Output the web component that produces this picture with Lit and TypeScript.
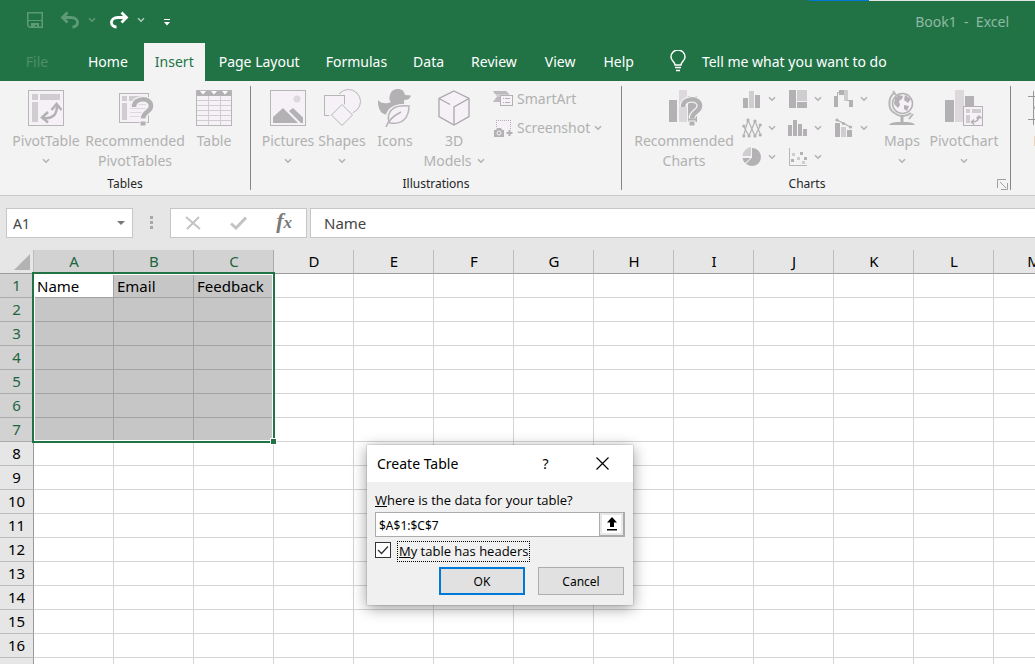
import { LitElement, html, svg, css, nothing, TemplateResult } from "lit";
import { customElement, property, state } from "lit/decorators.js";
import { classMap } from "lit/directives/class-map.js";

const DARK = "#b3b1b3";
const LINE = "#b8b6b8";
const MID = "#d0cdd0";
const PALE = "#dcd8dc";
const FILL = "#f5f1f7";

const icon = (w: number, h: number, body: unknown) => html`<svg
  width=${w}
  height=${h}
  viewBox="0 0 ${w} ${h}"
  fill="none"
  aria-hidden="true"
>${body}</svg>`;

const chevron = () => icon(8, 6, svg`<path d="M1 1.2 4 4.2 7 1.2" stroke="currentColor" stroke-width="1.5"/>`);

const question = svg`
  <path d="M18 18c0-10 17-10 17-1 0 6-8 5.500-8 12.500" stroke="#f3f3f3" stroke-width="7"/>
  <path d="M18 18c0-10 17-10 17-1 0 6-8 5.500-8 12.500" stroke="${DARK}" stroke-width="4.500"/>
  <rect x="24" y="32" width="6" height="5" fill="${DARK}" stroke="#f3f3f3"/>`;

const icons: Record<string, TemplateResult> = {
  pivotTable: icon(36, 36, svg`
    <rect x=".5" y=".5" width="35" height="35" fill="${FILL}" stroke="${LINE}"/>
    <path d="M4 4h6v6H4zM12 4h20v6H12zM4 12h6v20H4z" fill="${MID}"/>
    <path d="M16 28c8 1 13-3 13-12" stroke="${DARK}" stroke-width="2.500"/>
    <path d="M20 22l-6 5.500 6 5M23.500 20l5-6 5 6" stroke="${DARK}" stroke-width="2.500"/>`),
  recPivot: icon(38, 38, svg`
    <rect x="3.500" y="4.500" width="29" height="29" fill="${FILL}" stroke="${LINE}"/>
    <path d="M6 7h5v5H6zM13 7h17v5H13zM6 14h5v17H6z" fill="${MID}"/>
    <path d="M14 15.500h16M14 19.500h16M14 23.500h16M14 27.500h16" stroke="${PALE}"/>
    ${question}`),
  table: icon(36, 36, svg`
    <rect x=".5" y=".5" width="35" height="35" fill="${FILL}" stroke="${LINE}"/>
    <path d="M0 0h36v6H0z" fill="${DARK}"/>
    <path d="M4 1h6L7 4.500zM15 1h6l-3 3.500zM26 1h6l-3 3.500z" fill="#fff"/>
    <path d="M0 10.500h36M0 15.500h36M0 20.500h36M0 25.500h36M0 30.500h36M12.500 6v30M24.500 6v30" stroke="${MID}"/>
    <rect x=".5" y=".5" width="35" height="35" stroke="${LINE}"/>`),
  pictures: icon(36, 36, svg`
    <rect x=".5" y=".5" width="35" height="35" fill="${FILL}" stroke="${LINE}"/>
    <circle cx="27" cy="9" r="3.500" fill="${PALE}"/>
    <path d="M3 33V27l10-9 15 15zM19 21l4-3 10 9.500V33h-2z" fill="${DARK}"/>`),
  shapes: icon(38, 38, svg`
    <circle cx="25.500" cy="12.500" r="12" fill="${FILL}" stroke="${LINE}"/>
    <rect x="1.500" y="6.500" width="20" height="20" fill="${FILL}" stroke="#f3f3f3" stroke-width="3"/>
    <rect x="1.500" y="6.500" width="20" height="20" fill="${FILL}" stroke="${LINE}"/>
    <path d="M19 15 30 26 19 37 8 26z" fill="${FILL}" stroke="#f3f3f3" stroke-width="3"/>
    <path d="M19 15.500 29.500 26 19 36.500 8.500 26z" fill="${FILL}" stroke="${LINE}"/>`),
  icons: icon(38, 38, svg`
    <path d="M2 11c3 4 9 4 13 2-2-2-2-4-1-7 1-4 4-6 8-6s6 2 7 6l6 .5c-1 3-3 4.500-7 4.500 0 3 1 8-3 12-5 4-17 4-20 0-3-4-3-8-3-12z" fill="${DARK}"/>
    <path d="M33 17c-11-1-20 2-21 10-1 3 0 5 1 7 12 3 19-5 20-17z" fill="${FILL}" stroke="#f3f3f3" stroke-width="4"/>
    <path d="M33 17c-11-1-19 2-20.500 10-.5 3 0 5 1.500 7 12 2 19-5 19-17z" fill="${FILL}" stroke="${LINE}" stroke-width="1.500"/>
    <path d="M10 38c2-6 7-11 15-15" stroke="${DARK}" stroke-width="1.500"/>`),
  cube: icon(34, 36, svg`
    <path d="M17 1 32 8.500v18L17 35 2 26.500v-18z" fill="${FILL}" stroke="#aaa8aa" stroke-width="1.300"/>
    <path d="M2 8.500l11 6M32 8.500 17 17v18" stroke="#aaa8aa" stroke-width="1.300"/>`),
  smartArt: icon(20, 18, svg`
    <path d="M0 1h13l4 4H7v7H0l4-5.500z" fill="${MID}"/><path d="M0 1h13l3 3H2zM4 7h3v5H0z" fill="#bdbbbd"/>
    <rect x="7.500" y="5.500" width="12" height="10" fill="${FILL}" stroke="${DARK}"/>
    <path d="M10 8.500h1M12 8.500h5M10 12.500h1M12 12.500h5" stroke="${DARK}"/>`),
  screenshot: icon(20, 18, svg`
    <rect x="3" y="1" width="15" height="13" fill="${FILL}"/>
    <path d="M3 1.500h15M3.500 1v9M17.500 1v9" stroke="${DARK}" stroke-dasharray="1 1"/>
    <path d="M0 9h12v9H0z" fill="#f3f3f3"/>
    <path d="M1 11h2l1-2h4l1 2h2v7H1z" fill="${DARK}"/><circle cx="6" cy="14" r="2" fill="${DARK}" stroke="#f3f3f3"/>
    <path d="M16.500 10v7M13 13.500h7" stroke="#f3f3f3" stroke-width="4"/>
    <path d="M16.500 11v6M13.500 14h6" stroke="${DARK}" stroke-width="2"/>`),
  recCharts: icon(38, 38, svg`
    <path d="M4 11h8v22H4zM23 7h9v26h-9z" fill="${DARK}"/><path d="M14 1h8v32h-8z" fill="${PALE}"/>
    ${question}`),
  column: icon(20, 20, svg`<path d="M1 9h5v10H1zM13 6h5v13h-5z" fill="${DARK}"/><path d="M7 2h5v17H7z" fill="${MID}"/>`),
  treemap: icon(20, 20, svg`<path d="M1 1h7v18H1zM9 13h10v6H9z" fill="${DARK}"/><path d="M9 1h10v11H9z" fill="${MID}"/>`),
  waterfall: icon(20, 20, svg`<path d="M0 7h4v11H0zM5 1h5v5H5zM15 11h4v7h-4z" fill="${DARK}"/><path d="M10 1h4v11h-4z" fill="${MID}"/><path d="M3.500 7V3.500H6M13 11.500h4" stroke="${DARK}"/>`),
  line: icon(20, 20, svg`<path d="M1.500 18 6 2l7 16 5.500-11M1.500 8 7 18 13 3l6 15" stroke="${DARK}" stroke-width="1.200"/>
    <g fill="${DARK}"><circle cx="6" cy="2" r="1.600"/><circle cx="13" cy="3" r="1.600"/><circle cx="1.800" cy="8" r="1.600"/><circle cx="18.200" cy="7" r="1.600"/><circle cx="1.800" cy="18" r="1.600"/><circle cx="7" cy="18" r="1.600"/><circle cx="13" cy="18" r="1.600"/><circle cx="18.200" cy="17" r="1.600"/></g>`),
  histogram: icon(20, 20, svg`<path d="M0 7h4v11H0zM5 2h4v16H5zM10 6h4v12h-4zM15 11h4v7h-4z" fill="${DARK}"/>`),
  combo: icon(20, 20, svg`<path d="M1 5h5v14H1zM13 12h5v7h-5z" fill="${DARK}"/><path d="M7 9h5v10H7z" fill="${MID}"/><path d="M3 2l7 3.500 7 4" stroke="${DARK}" stroke-width="1.200"/><g fill="${DARK}"><circle cx="3" cy="2" r="1.600"/><circle cx="9.500" cy="5.500" r="1.600"/><circle cx="16.500" cy="9" r="1.600"/></g>`),
  pie: icon(20, 20, svg`<path d="M10 10V1a9 9 0 1 1-6.400 15.400z" fill="${DARK}"/><path d="M9 9V0A9.500 9.500 0 0 0 .5 9z" fill="${MID}"/><path d="M.5 11H8.500L3 16A9 9 0 0 1 .5 11z" fill="${DARK}"/><path d="M10 10 3 17.500" stroke="#f3f3f3"/>`),
  scatter: icon(20, 20, svg`<path d="M1.500 1v17.500H19" stroke="${LINE}"/><path d="M12 5h3v3h-3zM3 12h3v3H3zM16 10h3v3h-3z" fill="${DARK}"/><path d="M4 6h3v3H4zM9 10h3v3H9zM14 14h3v3h-3z" fill="${MID}"/>`),
  globe: icon(28, 36, svg`
    <path d="M6 3C0 8 0 18 5 22s12 6 18 1" stroke="${LINE}" stroke-width="2"/>
    <path d="M21 29l4-5M5 1l3 4" stroke="${LINE}" stroke-width="2"/>
    <circle cx="14.500" cy="13.500" r="10" fill="${FILL}" stroke="${DARK}" stroke-width="1.500"/>
    <path d="M7 8l4-3 4 1-1 3-3 2 1 4-2 3-4-4zM17 5l6 4-3 4-4-3zM16 15l5 1-2 5-3-2z" fill="${DARK}"/>
    <path d="M14 25v7" stroke="${DARK}" stroke-width="3"/><path d="M1 35c2-3 6-3 13-3s11 0 13 3z" fill="${DARK}"/>`),
  pivotChart: icon(38, 38, svg`
    <path d="M0 11h9v22H0zM20 7h9v26h-9z" fill="${DARK}"/><path d="M10 1h9v32h-9z" fill="${PALE}"/>
    <rect x="18.500" y="17.500" width="19" height="19" fill="${FILL}" stroke="${DARK}"/>
    <path d="M21 20h4v4h-4zM27 20h9v4h-9zM21 26h4v8h-4z" fill="${MID}"/>
    <path d="M27 33c5 0 7-2 7-6M29 30.500 26.500 33l2.500 2.500M31.500 29.500 34 27l2.500 2.500" stroke="${DARK}" stroke-width="1.500"/>`),
  sparkLine: icon(38, 36, svg`<path d="M5.500 1v34M32.500 1v34M0 6.500h38M0 29.500h38" stroke="#9a989a"/><path d="M6 17l7 6 6-9 5 8 8-8" stroke="${DARK}" stroke-width="2"/>`),
};

const save = icon(18, 18, svg`<path d="M1.750 1.750h14.500v14.500H3.500l-1.750-1.750z" stroke="currentColor" stroke-width="1.500"/><path d="M2 9.500h14" stroke="currentColor"/><path d="M5 12h8v5h-2v-3H9v3H5z" fill="currentColor"/>`);
const undo = icon(20, 18, svg`<path d="M2.500 6.500H11c9 0 8 9.500 1.500 9.500M7.500 1.500l-5 5 5 5" stroke="currentColor" stroke-width="2.800"/>`);
const redo = icon(20, 18, svg`<path d="M17.500 6.500H9c-9 0-8 9.500-1.500 9.500M12.500 1.500l5 5-5 5" stroke="currentColor" stroke-width="2.800"/>`);

type Tool = { label: string[]; icon: string; size: string; arrow?: "below" | "inline" };

const tables: Tool[] = [
  { label: ["PivotTable"], icon: "pivotTable", size: "w72", arrow: "below" },
  { label: ["Recommended", "PivotTables"], icon: "recPivot", size: "w106" },
  { label: ["Table"], icon: "table", size: "w52" },
];
const illustrations: Tool[] = [
  { label: ["Pictures"], icon: "pictures", size: "w54", arrow: "below" },
  { label: ["Shapes"], icon: "shapes", size: "w54", arrow: "below" },
  { label: ["Icons"], icon: "icons", size: "w52" },
  { label: ["3D", "Models"], icon: "cube", size: "w66", arrow: "inline" },
];
const miniCharts = ["column", "treemap", "waterfall", "line", "histogram", "combo", "pie", "scatter"];

@customElement("ribbon-bar")
class RibbonBar extends LitElement {
  static styles = css`
    :host { display: flex; height: 115px; box-sizing: border-box; overflow: hidden; background: #f3f3f3; border-bottom: 1px solid #c8c8c8; }
    button { font: inherit; color: inherit; background: none; border: 0; padding: 0; margin: 0; }
    svg { display: block; flex: none; }
    .group { flex: none; display: flex; flex-direction: column; position: relative; padding: 3px 11px 0 10px; }
    .group::after { content: ""; position: absolute; right: 0; top: 5px; bottom: 5px; width: 1px; background: #868686; }
    .last { padding-right: 7px; }
    .last .foot { margin-right: -4px; }
    .tools { display: flex; height: 91px; color: #b1b1b1; font-size: 14px; line-height: 20px; }
    .tool { flex: none; display: flex; flex-direction: column; align-items: center; white-space: nowrap; }
    .pic { height: 47px; display: flex; align-items: center; }
    .row { height: 20px; display: flex; align-items: center; justify-content: center; gap: 5px; }
    .w44 { width: 44px; } .w52 { width: 52px; } .w54 { width: 54px; } .w66 { width: 66px; }
    .w72 { width: 72px; } .w80 { width: 80px; } .w104 { width: 104px; } .w106 { width: 106px; }
    .stack { width: 124px; padding-left: 6px; box-sizing: border-box; display: flex; flex-direction: column; }
    .small { height: 29px; display: flex; align-items: center; gap: 4px; }
    .minis { padding-left: 6px; display: grid; grid-template-columns: repeat(3, 46px); grid-auto-rows: 29px; }
    .mini { display: flex; align-items: center; gap: 6px; }
    .foot { display: flex; height: 22px; align-items: center; font-size: 12px; line-height: 16px; color: #262626; }
    .caption { flex: 1; text-align: center; }
    .launch { width: 26px; display: flex; justify-content: flex-end; }
  `;

  private tool(t: Tool) {
    return html`<button class="tool ${t.size}" disabled>
      <span class="pic">${icons[t.icon]}</span>
      ${t.label.map((l, i) => html`<span class="row">${l}${t.arrow === "inline" && i === t.label.length - 1 ? chevron() : nothing}</span>`)}
      ${t.arrow === "below" ? html`<span class="row">${chevron()}</span>` : nothing}
    </button>`;
  }

  render() {
    return html`
      <section class="group">
        <div class="tools">${tables.map((t) => this.tool(t))}</div>
        <div class="foot"><span class="caption">Tables</span></div>
      </section>
      <section class="group">
        <div class="tools">
          ${illustrations.map((t) => this.tool(t))}
          <div class="stack">
            <button class="small" disabled>${icons.smartArt}<span>SmartArt</span></button>
            <button class="small" disabled>${icons.screenshot}<span>Screenshot</span>${chevron()}</button>
          </div>
        </div>
        <div class="foot"><span class="caption">Illustrations</span></div>
      </section>
      <section class="group last">
        <div class="tools">
          ${this.tool({ label: ["Recommended", "Charts"], icon: "recCharts", size: "w104" })}
          <div class="minis">
            ${miniCharts.map((m) => html`<button class="mini" aria-label="${m} chart" disabled>${icons[m]}${chevron()}</button>`)}
          </div>
          ${this.tool({ label: ["Maps"], icon: "globe", size: "w44", arrow: "below" })}
          ${this.tool({ label: ["PivotChart"], icon: "pivotChart", size: "w80", arrow: "below" })}
        </div>
        <div class="foot">
          <span class="caption">Charts</span>
          <button class="launch" aria-label="Chart options">
            ${icon(11, 11, svg`<path d="M.5 9V.5H9M3 3l6 6M10.500 4v6.500H4" stroke="#a0a0a0"/>`)}
          </button>
        </div>
      </section>
      <section class="group">
        <div class="tools">${this.tool({ label: ["Line"], icon: "sparkLine", size: "w52" })}</div>
      </section>
    `;
  }
}

@customElement("sheet-grid")
class SheetGrid extends LitElement {
  @property({ type: Number }) selectedRows = 7;
  @property({ type: Number }) selectedCols = 3;
  @state() private values = ["Name", "Email", "Feedback"];
  @state() private colCount = 13;
  @state() private rowCount = 17;

  private observer = new ResizeObserver(() => {
    this.colCount = Math.max(this.selectedCols, Math.min(26, Math.ceil((this.clientWidth - 34) / 80)));
    this.rowCount = Math.max(this.selectedRows, Math.ceil((this.clientHeight - 24) / 24));
  });

  connectedCallback() {
    super.connectedCallback();
    this.observer.observe(this);
  }

  disconnectedCallback() {
    this.observer.disconnect();
    super.disconnectedCallback();
  }

  static styles = css`
    :host { display: block; position: relative; overflow: hidden; background: #fff; }
    table { border-collapse: separate; border-spacing: 0; table-layout: fixed; width: max-content; font-size: 15px; line-height: 22px; }
    th, td { box-sizing: border-box; height: 24px; padding: 0; white-space: nowrap; border: 0 solid #d4d4d4; border-width: 0 1px 1px 0; }
    th { background: #e6e6e6; font-weight: 400; text-align: center; vertical-align: top; line-height: 23px; color: #000; }
    thead th { width: 80px; min-width: 80px; padding-left: 1px; border-color: #bdbdbd; border-bottom-color: #9b9b9b; }
    th.edge { width: 34px; min-width: 34px; border-right-color: #9b9b9b; border-bottom-color: #bdbdbd; }
    thead th.edge { border-right-color: #bdbdbd; border-bottom-color: #9b9b9b; }
    .edge svg { display: block; margin: 4px 0 0 13px; }
    th.on { background: #d2d2d2; color: #1e6440; border-color: #ababab; }
    td { padding-left: 3px; color: #000; }
    td.on { background: #c6c6c6; border-color: #a2a2a2; }
    td.active { background: #fff; }
    .selection { position: absolute; left: 32px; top: 22px; box-sizing: border-box; border: 2px solid #217346; box-shadow: inset 0 0 0 1px #fff; pointer-events: none; }
    .handle { position: absolute; right: -4px; bottom: -4px; width: 5px; height: 5px; background: #217346; border: 1px solid #fff; }
  `;

  render() {
    const cols = Array.from({ length: this.colCount }, (_, i) => String.fromCharCode(65 + i));
    const rows = Array.from({ length: this.rowCount }, (_, i) => i + 1);
    return html`
      <table>
        <thead>
          <tr>
            <th class="edge">${icon(16, 16, svg`<path d="M16 0v16H0z" fill="#b3b3b3"/>`)}</th>
            ${cols.map((c, i) => html`<th scope="col" class=${classMap({ on: i < this.selectedCols })}>${c}</th>`)}
          </tr>
        </thead>
        <tbody>
          ${rows.map((r) => html`<tr>
            <th scope="row" class=${classMap({ edge: true, on: r <= this.selectedRows })}>${r}</th>
            ${cols.map((_, i) => html`<td class=${classMap({ on: r <= this.selectedRows && i < this.selectedCols, active: r === 1 && i === 0 })}>${r === 1 ? this.values[i] ?? nothing : nothing}</td>`)}
          </tr>`)}
        </tbody>
      </table>
      <div class="selection" style="width:${this.selectedCols * 80 + 3}px;height:${this.selectedRows * 24 + 3}px"><span class="handle"></span></div>
    `;
  }
}

@customElement("create-table-dialog")
class CreateTableDialog extends LitElement {
  static styles = css`
    :host { display: block; box-sizing: border-box; background: #f0f0f0; box-shadow: 0 3px 14px rgba(0, 0, 0, 0.4), 0 0 1px rgba(0, 0, 0, 0.5); font-size: 12px; line-height: 16px; color: #000; }
    * { box-sizing: border-box; }
    button { font: inherit; color: inherit; padding: 0; margin: 0; }
    svg { display: block; }
    header { display: flex; align-items: center; height: 37px; padding: 0 2px 0 10px; background: #fff; font-size: 14px; }
    h1 { flex: 1; margin: 0; font-size: 14px; font-weight: 400; }
    .cap { width: 57px; height: 37px; display: flex; align-items: center; justify-content: center; background: none; border: 0; }
    .body { display: flex; flex-direction: column; padding: 10px 8px; }
    .question, .check label { font-family: "Open Sans", "Noto Sans", sans-serif; font-size: 13px; }
    .question { margin-bottom: 4px; }
    .field { display: flex; height: 25px; border: 1px solid #ababab; background: #fff; }
    .field input { flex: 1; min-width: 0; border: 0; padding: 2px 3px 0; font: inherit; background: none; outline: none; }
    .pick { width: 25px; border: 1px solid #ababab; border-width: 0 1px 1px; background: #fff; display: flex; align-items: center; justify-content: center; box-shadow: inset 0 0 0 2px #e8e8e8; }
    .check { display: flex; align-items: center; gap: 6px; margin-top: 4px; }
    .box { appearance: none; margin: 0; width: 16px; height: 16px; border: 1px solid #333; background: #fff; grid-area: 1 / 1; }
    .mark { grid-area: 1 / 1; pointer-events: none; display: none; }
    .box:checked + .mark { display: block; }
    .tick { display: grid; padding-bottom: 3px; }
    .check label { padding: 1px 1px; border: 1px dotted #000; height: 21px; }
    .actions { display: flex; justify-content: flex-end; gap: 13px; padding-right: 1px; margin-top: 5px; }
    .btn { width: 86px; height: 28px; padding-top: 1px; background: #e1e1e1; border: 1px solid #adadad; }
    .primary { border: 2px solid #0078d7; }
  `;

  render() {
    return html`
      <header>
        <h1>Create Table</h1>
        <button class="cap" aria-label="Help">?</button>
        <button class="cap" aria-label="Close">${icon(13, 13, svg`<path d="M.5.5l12 12M12.500.5l-12 12" stroke="#000" stroke-width="1.200"/>`)}</button>
      </header>
      <div class="body">
        <label class="question" for="range"><u>W</u>here is the data for your table?</label>
        <div class="field">
          <input id="range" type="text" value="$A$1:$C$7" />
          <button class="pick" aria-label="Select range">${icon(12, 14, svg`<path d="M6 0l5 5.500H8V10H4V5.500H1zM1 12h10v1.500H1z" fill="#000"/>`)}</button>
        </div>
        <div class="check">
          <span class="tick">
            <input class="box" id="headers" type="checkbox" checked />
            <svg class="mark" width="16" height="16" viewBox="0 0 16 16" fill="none" aria-hidden="true"><path d="M3 8l3.500 3.500L13 4.500" stroke="#333" stroke-width="1.300"/></svg>
          </span>
          <label for="headers"><u>M</u>y table has headers</label>
        </div>
        <div class="actions">
          <button class="btn primary">OK</button>
          <button class="btn">Cancel</button>
        </div>
      </div>
    `;
  }
}

@customElement("app-root")
class AppRoot extends LitElement {
  static styles = css`
    :host { display: flex; flex-direction: column; position: relative; height: 100vh; overflow: hidden; background: #e6e6e6; font-family: "Noto Sans", "Open Sans", sans-serif; }
    * { box-sizing: border-box; }
    button, input { font: inherit; color: inherit; background: none; border: 0; padding: 0; margin: 0; }
    svg { display: block; flex: none; }
    .top { background: #217346; color: #fff; flex: none; }
    .behind { display: flex; justify-content: flex-end; height: 1px; }
    .blue { width: 60px; background: #0078d7; }
    .light { width: 166px; background: #e4e4e4; }
    .title { display: flex; align-items: center; height: 42px; padding: 0 26px 4px; }
    .quick { flex: 1; display: flex; align-items: center; }
    .dim { color: #5d9a77; }
    .pair { display: flex; align-items: center; gap: 8px; margin-left: 13px; }
    .dim.pair { margin-left: 16px; }
    .soft { color: #a9cdb8; }
    .more { margin-left: 19px; padding-top: 4px; }
    .book { color: #90b9a2; font-size: 14px; white-space: pre; padding-top: 2px; }
    nav { display: flex; height: 38px; padding-left: 12px; font-size: 14px; white-space: nowrap; }
    nav button { padding-bottom: 2px; }
    .tab { padding: 0 13px 2px; }
    .file { width: 50px; margin-right: 13px; color: #4d8f6a; }
    .current { background: #f3f3f3; color: #217346; padding: 0 11px 2px; margin: 0 1px 0 3px; }
    .wide { padding: 0 14px 2px; }
    .tell { display: flex; align-items: center; gap: 16px; margin-left: 22px; }
    ribbon-bar, .formula { flex: none; }
    .formula { display: flex; height: 54px; padding: 12px 0 12px 6px; color: #444; font-size: 15px; }
    .slot { height: 30px; border: 1px solid #c6c6c6; background: #fff; display: flex; align-items: center; }
    .name { width: 127px; padding: 0 7px 0 6px; }
    .name input { flex: 1; min-width: 0; font-size: 14px; }
    .grip { width: 37px; display: flex; align-items: center; justify-content: center; }
    .fx { width: 137px; margin-right: 3px; padding: 0 14px; justify-content: space-between; }
    .fn { font: italic bold 22px/24px "Liberation Serif", serif; color: #7a7a7a; padding-bottom: 3px; }
    .fn small { font-size: 17px; }
    .bar { flex: 1; border-right: 0; }
    .bar input { flex: 1; min-width: 0; padding: 0 13px; }
    sheet-grid { flex: 1; min-height: 0; }
    create-table-dialog { position: absolute; left: 367px; top: 445px; width: 266px; }
  `;

  render() {
    return html`
      <div class="top">
        <div class="behind"><span class="blue"></span><span class="light"></span></div>
        <div class="title">
          <div class="quick">
            <button class="dim" aria-label="Save">${save}</button>
            <span class="pair dim"><button aria-label="Undo">${undo}</button><button aria-label="Undo history">${chevron()}</button></span>
            <span class="pair"><button aria-label="Redo">${redo}</button><button class="soft" aria-label="Redo history">${chevron()}</button></span>
            <button class="more" aria-label="Customize toolbar">${icon(6, 7, svg`<path d="M0 .5h6" stroke="#fff"/><path d="M0 3h6L3 6.500z" fill="#fff"/>`)}</button>
          </div>
          <span class="book">Book1  -  Excel</span>
        </div>
        <nav>
          <button class="tab file">File</button>
          <button class="tab">Home</button>
          <button class="tab current">Insert</button>
          ${["Page Layout", "Formulas", "Data"].map((t) => html`<button class="tab">${t}</button>`)}
          ${["Review", "View", "Help"].map((t) => html`<button class="tab wide">${t}</button>`)}
          <button class="tell">
            ${icon(16, 22, svg`<path d="M5 15c0-3-4-4-4-8a7 7 0 0 1 14 0c0 4-4 5-4 8z" stroke="#fff" stroke-width="1.500"/><path d="M5 17.500h6M6 20.500h4" stroke="#fff" stroke-width="1.500"/>`)}
            <span>Tell me what you want to do</span>
          </button>
        </nav>
      </div>
      <ribbon-bar></ribbon-bar>
      <div class="formula">
        <div class="slot name">
          <input aria-label="Name box" value="A1" />
          <button aria-label="Named ranges">${icon(8, 4, svg`<path d="M0 0h8L4 4z" fill="#777"/>`)}</button>
        </div>
        <span class="grip">${icon(3, 14, svg`<path d="M0 0h3v3H0zM0 5h3v3H0zM0 10h3v3H0z" fill="#a8a8a8"/>`)}</span>
        <div class="slot fx">
          <button aria-label="Cancel entry">${icon(16, 14, svg`<path d="M1 1l14 12M14 1 2 13" stroke="#c4c4c4" stroke-width="2"/>`)}</button>
          <button aria-label="Enter">${icon(17, 14, svg`<path d="M1 7.500l5 4.500L16 1.500" stroke="#c4c4c4" stroke-width="3"/>`)}</button>
          <button class="fn" aria-label="Insert function">f<small>x</small></button>
        </div>
        <div class="slot bar"><input aria-label="Formula bar" value="Name" /></div>
      </div>
      <sheet-grid></sheet-grid>
      <create-table-dialog role="dialog" aria-label="Create Table"></create-table-dialog>
    `;
  }
}
